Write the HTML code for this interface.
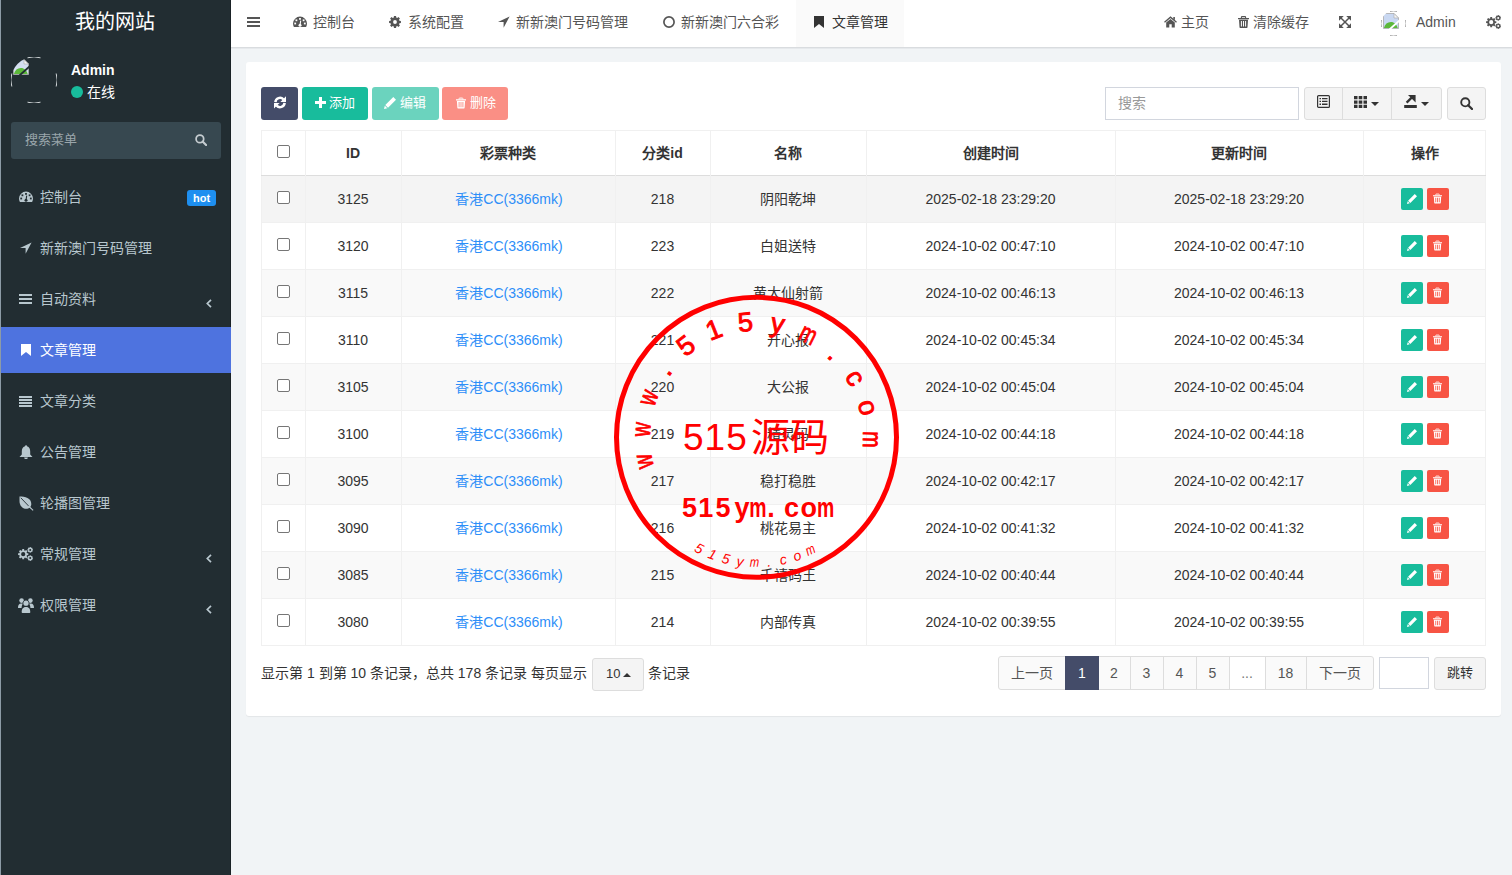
<!DOCTYPE html>
<html lang="zh-CN"><head><meta charset="utf-8">
<style>
*{box-sizing:border-box;margin:0;padding:0}
html,body{width:1512px;height:875px;overflow:hidden}
body{font-family:"Liberation Sans",sans-serif;font-size:14px;color:#333;background:#f1f4f6;position:relative}
.abs{position:absolute}
svg{display:block}
.t{position:absolute;white-space:nowrap;line-height:18px}
</style></head><body>

<div class="abs" style="left:0;top:0;width:231px;height:875px;background:#222d32"></div>
<div class="abs" style="left:0;top:0;width:1px;height:875px;background:#8d9ba6"></div>
<div class="abs" style="left:230px;top:0;width:1px;height:875px;background:#1a2226"></div>
<div class="t" style="left:0;width:230px;text-align:center;top:10px;color:#fff;font-size:20px;line-height:24px">我的网站</div>
<svg class="abs" style="left:11px;top:57px" width="46" height="46" viewBox="0 0 46 46"><g fill="none" stroke="#cfd4d6" stroke-width="1"><path d="M16.5 0.8A22.2 22.2 0 0 1 29.5 0.8"/><path d="M16.5 45.2A22.2 22.2 0 0 0 29.5 45.2"/><path d="M0.8 16.5A22.2 22.2 0 0 0 0.8 29.5"/><path d="M45.2 16.5A22.2 22.2 0 0 1 45.2 29.5"/></g></svg>
<div class="abs" style="left:11px;top:57px;width:46px;height:46px;border-radius:50%;overflow:hidden"><svg class="abs" style="left:2px;top:2px" width="16" height="16" viewBox="0 0 16 16"><path fill="#d4def0" stroke="#a9a9a9" stroke-width=".8" d="M.5 .5h10.5l4.5 4.5v10.5H.5z"/><path fill="#f4f4f4" stroke="#a9a9a9" stroke-width=".6" d="M11 .5v4.5h4.5z"/><path fill="#5cb83a" d="M.9 15.1c1-4 3.5-6 7-6s5.6 2.4 6.8 6z"/><path stroke="#222d32" stroke-width="1.8" d="M6.5 16.5L16.5 7.5"/></svg></div>
<div class="t" style="left:71px;top:61px;color:#fff;font-weight:bold;font-size:14px">Admin</div>
<div class="abs" style="left:71px;top:86px;width:12px;height:12px;border-radius:50%;background:#18bc9c"></div>
<div class="t" style="left:87px;top:83px;color:#fff;font-size:14px">在线</div>
<div class="abs" style="left:11px;top:122px;width:210px;height:37px;background:#374850;border-radius:3px"></div>
<div class="t" style="left:25px;top:131px;color:#9aa6ab;font-size:13px">搜索菜单</div>
<svg class="abs" style="left:195px;top:134px" width="12" height="12" viewBox="0 0 13 13"><circle cx="5.3" cy="5.3" r="4.1" fill="none" stroke="#c5ccd0" stroke-width="1.9"/><path d="M8.2 8.2l3.8 3.8" stroke="#c5ccd0" stroke-width="2.3" stroke-linecap="round"/></svg>
<div class="t" style="left:40px;top:188px;color:#b8c7ce;font-size:14px">控制台</div>
<svg class="abs" style="left:19px;top:191px" width="14" height="12" viewBox="0 0 14 12"><path fill="#b8c7ce" d="M7 .6A7 7 0 0 0 0 7.6c0 1.3.3 2.4.9 3.4h12.2c.6-1 .9-2.1.9-3.4A7 7 0 0 0 7 .6z"/><g fill="#222d32"><rect x="6.1" y="2" width="1.8" height="1.8"/><rect x="2.5" y="3.4" width="1.8" height="1.8"/><rect x="9.7" y="3.4" width="1.8" height="1.8"/><rect x="1.3" y="6.6" width="1.8" height="1.8"/><rect x="10.9" y="6.6" width="1.8" height="1.8"/><circle cx="7" cy="9.3" r="1.5"/></g><path d="M7 9.3L7.7 4.6" stroke="#222d32" stroke-width="1.1"/></svg>
<div class="abs" style="left:187px;top:190px;width:29px;height:16px;background:#1e8ff0;color:#fff;border-radius:3px;font-size:11px;font-weight:bold;line-height:16px;text-align:center">hot</div>
<div class="t" style="left:40px;top:239px;color:#b8c7ce;font-size:14px">新新澳门号码管理</div>
<svg class="abs" style="left:20px;top:242px" width="12" height="12" viewBox="0 0 12 12"><path fill="#b8c7ce" d="M11.6 .6L0 6h5.6v5.8z"/></svg>
<div class="t" style="left:40px;top:290px;color:#b8c7ce;font-size:14px">自动资料</div>
<svg class="abs" style="left:19px;top:294px" width="13" height="10" viewBox="0 0 13 10"><path fill="#b8c7ce" d="M0 0h13v2H0zM0 4h13v2H0zM0 8h13v2H0z"/></svg>
<svg class="abs" style="left:206px;top:299px" width="6" height="9" viewBox="0 0 6 9"><path d="M5 .8L1.3 4.5 5 8.2" fill="none" stroke="#b8c7ce" stroke-width="1.7"/></svg>
<div class="abs" style="left:1px;top:327px;width:230px;height:46px;background:#4e73df"></div>
<div class="t" style="left:40px;top:341px;color:#fff;font-size:14px">文章管理</div>
<svg class="abs" style="left:21px;top:344px" width="10" height="12" viewBox="0 0 10 12"><path fill="#fff" d="M0 0h10v12L5 8 0 12z"/></svg>
<div class="t" style="left:40px;top:392px;color:#b8c7ce;font-size:14px">文章分类</div>
<svg class="abs" style="left:19px;top:396px" width="13" height="11" viewBox="0 0 13 11"><path fill="#b8c7ce" d="M0 0h13v2H0zM0 3h13v2H0zM0 6h13v2H0zM0 9h13v2H0z"/></svg>
<div class="t" style="left:40px;top:443px;color:#b8c7ce;font-size:14px">公告管理</div>
<svg class="abs" style="left:19px;top:445px" width="14" height="14" viewBox="0 0 14 14"><path fill="#b8c7ce" d="M7 .3c.6 0 1 .4 1 .9 2.4.5 3.2 2.8 3.2 5.2v3.2l2.3 2.3H.5l2.3-2.3V6.4C2.8 4 3.6 1.7 6 1.2c0-.5.4-.9 1-.9zM5.2 12.4h3.6a1.8 1.8 0 0 1-3.6 0z"/></svg>
<div class="t" style="left:40px;top:494px;color:#b8c7ce;font-size:14px">轮播图管理</div>
<svg class="abs" style="left:19px;top:496px" width="15" height="15" viewBox="0 0 15 15"><path fill="#b8c7ce" d="M.5 .5C6 .5 12.3 1.8 12.3 8c0 3-2.3 4.8-5 4.8C3.2 12.8.5 9.5.5 5z"/><path d="M1.8 1.8L9.8 10.2" stroke="#222d32" stroke-width=".9"/><path d="M9.5 10l4.6 4.4" stroke="#b8c7ce" stroke-width="1.1"/></svg>
<div class="t" style="left:40px;top:545px;color:#b8c7ce;font-size:14px">常规管理</div>
<svg class="abs" style="left:18px;top:547px" width="15" height="14" viewBox="0 0 15 14"><path fill="#b8c7ce" fill-rule="evenodd" d="M10.32 6.29 L10.32 8.11 L8.96 8.24 L8.60 9.12 L9.47 10.17 L8.17 11.47 L7.12 10.60 L6.24 10.96 L6.11 12.32 L4.29 12.32 L4.16 10.96 L3.28 10.60 L2.23 11.47 L0.93 10.17 L1.80 9.12 L1.44 8.24 L0.08 8.11 L0.08 6.29 L1.44 6.16 L1.80 5.28 L0.93 4.23 L2.23 2.93 L3.28 3.80 L4.16 3.44 L4.29 2.08 L6.11 2.08 L6.24 3.44 L7.12 3.80 L8.17 2.93 L9.47 4.23 L8.60 5.28 L8.96 6.16ZM7.30 7.20A2.1 2.1 0 1 0 3.10 7.20A2.1 2.1 0 1 0 7.30 7.20ZM15.04 2.33 L15.04 3.47 L14.31 3.53 L14.14 3.94 L14.61 4.51 L13.81 5.31 L13.24 4.84 L12.83 5.01 L12.77 5.74 L11.63 5.74 L11.57 5.01 L11.16 4.84 L10.59 5.31 L9.79 4.51 L10.26 3.94 L10.09 3.53 L9.36 3.47 L9.36 2.33 L10.09 2.27 L10.26 1.86 L9.79 1.29 L10.59 0.49 L11.16 0.96 L11.57 0.79 L11.63 0.06 L12.77 0.06 L12.83 0.79 L13.24 0.96 L13.81 0.49 L14.61 1.29 L14.14 1.86 L14.31 2.27ZM13.20 2.90A1.0 1.0 0 1 0 11.20 2.90A1.0 1.0 0 1 0 13.20 2.90ZM15.04 10.53 L15.04 11.67 L14.31 11.73 L14.14 12.14 L14.61 12.71 L13.81 13.51 L13.24 13.04 L12.83 13.21 L12.77 13.94 L11.63 13.94 L11.57 13.21 L11.16 13.04 L10.59 13.51 L9.79 12.71 L10.26 12.14 L10.09 11.73 L9.36 11.67 L9.36 10.53 L10.09 10.47 L10.26 10.06 L9.79 9.49 L10.59 8.69 L11.16 9.16 L11.57 8.99 L11.63 8.26 L12.77 8.26 L12.83 8.99 L13.24 9.16 L13.81 8.69 L14.61 9.49 L14.14 10.06 L14.31 10.47ZM13.20 11.10A1.0 1.0 0 1 0 11.20 11.10A1.0 1.0 0 1 0 13.20 11.10Z"/></svg>
<svg class="abs" style="left:206px;top:554px" width="6" height="9" viewBox="0 0 6 9"><path d="M5 .8L1.3 4.5 5 8.2" fill="none" stroke="#b8c7ce" stroke-width="1.7"/></svg>
<div class="t" style="left:40px;top:596px;color:#b8c7ce;font-size:14px">权限管理</div>
<svg class="abs" style="left:18px;top:598px" width="16" height="15" viewBox="0 0 16 15"><g fill="#b8c7ce"><circle cx="3.6" cy="2.6" r="2.3"/><circle cx="12.4" cy="2.6" r="2.3"/><path d="M0 10c0-3 .9-4.6 3.3-4.6h1.8C4.2 6.4 3.6 8 3.6 10z"/><path d="M16 10c0-3-.9-4.6-3.3-4.6h-1.8c.9 1 1.5 2.6 1.5 4.6z"/></g><circle cx="8" cy="5.2" r="3.2" fill="#222d32"/><circle cx="8" cy="5.2" r="2.6" fill="#b8c7ce"/><path fill="#222d32" d="M2.9 15c-.3-3.6.8-6.8 5.1-6.8s5.4 3.2 5.1 6.8z"/><path fill="#b8c7ce" d="M3.7 14.3c0-3 .9-5.4 4.3-5.4s4.3 2.4 4.3 5.4c0 .5-.3.7-.7.7H4.4c-.4 0-.7-.2-.7-.7z"/></svg>
<svg class="abs" style="left:206px;top:605px" width="6" height="9" viewBox="0 0 6 9"><path d="M5 .8L1.3 4.5 5 8.2" fill="none" stroke="#b8c7ce" stroke-width="1.7"/></svg>
<div class="abs" style="left:231px;top:0;width:1281px;height:47px;background:#fff"></div>
<div class="abs" style="left:231px;top:47px;width:1281px;height:1px;background:#d9dcdf"></div>
<div class="abs" style="left:231px;top:48px;width:1281px;height:1px;background:#e6e9ec"></div>
<svg class="abs" style="left:247px;top:17px" width="13" height="10" viewBox="0 0 13 10"><path fill="#555" d="M0 0h13v2H0zM0 4h13v2H0zM0 8h13v2H0z"/></svg>
<div class="abs" style="left:796px;top:0;width:108px;height:47px;background:#fafafa"></div>
<svg class="abs" style="left:293px;top:16px" width="14" height="12" viewBox="0 0 14 12"><path fill="#555" d="M7 .6A7 7 0 0 0 0 7.6c0 1.3.3 2.4.9 3.4h12.2c.6-1 .9-2.1.9-3.4A7 7 0 0 0 7 .6z"/><g fill="#fff"><rect x="6.1" y="2" width="1.8" height="1.8"/><rect x="2.5" y="3.4" width="1.8" height="1.8"/><rect x="9.7" y="3.4" width="1.8" height="1.8"/><rect x="1.3" y="6.6" width="1.8" height="1.8"/><rect x="10.9" y="6.6" width="1.8" height="1.8"/><circle cx="7" cy="9.3" r="1.5"/></g><path d="M7 9.3L7.7 4.6" stroke="#fff" stroke-width="1.1"/></svg>
<div class="t" style="left:313px;top:13px;color:#555">控制台</div>
<svg class="abs" style="left:389px;top:16px" width="12" height="12" viewBox="0 0 12 12"><path fill="#555" fill-rule="evenodd" d="M11.91 4.95 L11.91 7.05 L10.43 7.23 L10.00 8.26 L10.92 9.43 L9.43 10.92 L8.26 10.00 L7.23 10.43 L7.05 11.91 L4.95 11.91 L4.77 10.43 L3.74 10.00 L2.57 10.92 L1.08 9.43 L2.00 8.26 L1.57 7.23 L0.09 7.05 L0.09 4.95 L1.57 4.77 L2.00 3.74 L1.08 2.57 L2.57 1.08 L3.74 2.00 L4.77 1.57 L4.95 0.09 L7.05 0.09 L7.23 1.57 L8.26 2.00 L9.43 1.08 L10.92 2.57 L10.00 3.74 L10.43 4.77ZM7.90 6.00A1.9 1.9 0 1 0 4.10 6.00A1.9 1.9 0 1 0 7.90 6.00Z"/></svg>
<div class="t" style="left:408px;top:13px;color:#555">系统配置</div>
<svg class="abs" style="left:498px;top:16px" width="12" height="12" viewBox="0 0 12 12"><path fill="#555" d="M11.6 .6L0 6h5.6v5.8z"/></svg>
<div class="t" style="left:516px;top:13px;color:#555">新新澳门号码管理</div>
<svg class="abs" style="left:663px;top:16px" width="12" height="12" viewBox="0 0 12 12"><circle cx="6" cy="6" r="5.1" fill="none" stroke="#555" stroke-width="1.7"/></svg>
<div class="t" style="left:681px;top:13px;color:#555">新新澳门六合彩</div>
<svg class="abs" style="left:814px;top:16px" width="10" height="12" viewBox="0 0 10 12"><path fill="#333" d="M0 0h10v12L5 8 0 12z"/></svg>
<div class="t" style="left:832px;top:13px;color:#333">文章管理</div>
<svg class="abs" style="left:1164px;top:16px" width="13" height="12" viewBox="0 0 13 12"><path fill="none" stroke="#555" stroke-width="1.3" d="M.5 6.3L6.5 1.2l6 5.1"/><path fill="#555" d="M9.3 1h1.6v3.2L9.3 2.9z"/><path fill="#555" d="M2.2 6.6L6.5 3l4.3 3.6V11.5H7.7V8.3H5.3v3.2H2.2z"/></svg>
<div class="t" style="left:1181px;top:13px;color:#555">主页</div>
<svg class="abs" style="left:1238px;top:16px" width="11" height="12" viewBox="0 0 11 12"><path fill="none" stroke="#555" stroke-width="1.1" d="M3.4 2.2V1.2c0-.4.3-.6.6-.6h3c.3 0 .6.2.6.6v1"/><path fill="#555" d="M0 1.9h11v1.4H0zM1 3.8h9l-.5 7.5c0 .4-.3.7-.7.7H2.2c-.4 0-.7-.3-.7-.7z"/><path fill="#fff" d="M2.9 5h1v5.6h-1zM5 5h1v5.6H5zM7.1 5h1v5.6h-1z"/></svg>
<div class="t" style="left:1253px;top:13px;color:#555">清除缓存</div>
<svg class="abs" style="left:1339px;top:16px" width="12" height="12" viewBox="0 0 12 12"><path fill="#555" d="M0 0h4.8L0 4.8zM12 0v4.8L7.2 0zM12 12H7.2L12 7.2zM0 12V7.2L4.8 12z"/><path stroke="#555" stroke-width="1.5" d="M1.2 1.2l9.6 9.6M10.8 1.2l-9.6 9.6"/></svg>
<svg class="abs" style="left:1381px;top:11px" width="25" height="25" viewBox="0 0 25 25"><g fill="none" stroke="#aaa" stroke-width="1"><path d="M9 0.5A12 12 0 0 1 16 0.5"/><path d="M9 24.5A12 12 0 0 0 16 24.5"/><path d="M0.5 9A12 12 0 0 0 0.5 16"/><path d="M24.5 9A12 12 0 0 1 24.5 16"/></g></svg>
<div class="abs" style="left:1381px;top:11px;width:25px;height:25px;border-radius:50%;overflow:hidden"><svg class="abs" style="left:2px;top:2px" width="16" height="16" viewBox="0 0 16 16"><path fill="#c9d8f2" stroke="#a9a9a9" stroke-width=".8" d="M.5 .5h10.5l4.5 4.5v10.5H.5z"/><path fill="#f4f4f4" stroke="#a9a9a9" stroke-width=".6" d="M11 .5v4.5h4.5z"/><path fill="#5cb83a" d="M.9 15.1c1-4 3.5-6 7-6s5.6 2.4 6.8 6z"/><path stroke="#fff" stroke-width="1.8" d="M6.5 16.5L16.5 7.5"/></svg></div>
<div class="t" style="left:1416px;top:13px;color:#555;font-size:14px">Admin</div>
<svg class="abs" style="left:1486px;top:15px" width="15" height="14" viewBox="0 0 15 14"><path fill="#555" fill-rule="evenodd" d="M10.32 6.29 L10.32 8.11 L8.96 8.24 L8.60 9.12 L9.47 10.17 L8.17 11.47 L7.12 10.60 L6.24 10.96 L6.11 12.32 L4.29 12.32 L4.16 10.96 L3.28 10.60 L2.23 11.47 L0.93 10.17 L1.80 9.12 L1.44 8.24 L0.08 8.11 L0.08 6.29 L1.44 6.16 L1.80 5.28 L0.93 4.23 L2.23 2.93 L3.28 3.80 L4.16 3.44 L4.29 2.08 L6.11 2.08 L6.24 3.44 L7.12 3.80 L8.17 2.93 L9.47 4.23 L8.60 5.28 L8.96 6.16ZM7.30 7.20A2.1 2.1 0 1 0 3.10 7.20A2.1 2.1 0 1 0 7.30 7.20ZM15.04 2.33 L15.04 3.47 L14.31 3.53 L14.14 3.94 L14.61 4.51 L13.81 5.31 L13.24 4.84 L12.83 5.01 L12.77 5.74 L11.63 5.74 L11.57 5.01 L11.16 4.84 L10.59 5.31 L9.79 4.51 L10.26 3.94 L10.09 3.53 L9.36 3.47 L9.36 2.33 L10.09 2.27 L10.26 1.86 L9.79 1.29 L10.59 0.49 L11.16 0.96 L11.57 0.79 L11.63 0.06 L12.77 0.06 L12.83 0.79 L13.24 0.96 L13.81 0.49 L14.61 1.29 L14.14 1.86 L14.31 2.27ZM13.20 2.90A1.0 1.0 0 1 0 11.20 2.90A1.0 1.0 0 1 0 13.20 2.90ZM15.04 10.53 L15.04 11.67 L14.31 11.73 L14.14 12.14 L14.61 12.71 L13.81 13.51 L13.24 13.04 L12.83 13.21 L12.77 13.94 L11.63 13.94 L11.57 13.21 L11.16 13.04 L10.59 13.51 L9.79 12.71 L10.26 12.14 L10.09 11.73 L9.36 11.67 L9.36 10.53 L10.09 10.47 L10.26 10.06 L9.79 9.49 L10.59 8.69 L11.16 9.16 L11.57 8.99 L11.63 8.26 L12.77 8.26 L12.83 8.99 L13.24 9.16 L13.81 8.69 L14.61 9.49 L14.14 10.06 L14.31 10.47ZM13.20 11.10A1.0 1.0 0 1 0 11.20 11.10A1.0 1.0 0 1 0 13.20 11.10Z"/></svg>
<div class="abs" style="left:246px;top:62px;width:1255px;height:654px;background:#fff;border-radius:3px;box-shadow:0 1px 1px rgba(0,0,0,.06)"></div>
<div class="abs" style="left:261px;top:87px;width:37px;height:33px;background:#444c69;border-radius:3px"></div>
<svg class="abs" style="left:274px;top:96px" width="12" height="13" viewBox="0 0 12 13"><path fill="none" stroke="#fff" stroke-width="2.5" d="M1.4 6.2A4.6 4.6 0 0 1 9.4 3.4"/><path fill="#fff" d="M12 .3v5.6H6.4z"/><path fill="none" stroke="#fff" stroke-width="2.5" d="M10.6 6.8A4.6 4.6 0 0 1 2.6 9.6"/><path fill="#fff" d="M0 12.5V6.9h5.6z"/></svg>
<div class="abs" style="left:302px;top:87px;width:66px;height:33px;background:#18bc9c;border-radius:3px"></div>
<svg class="abs" style="left:315px;top:97px" width="11" height="11" viewBox="0 0 11 11"><path fill="#fff" d="M4 0h3v4h4v3H7v4H4V7H0V4h4z"/></svg>
<div class="t" style="left:329px;top:94px;color:#fff;font-size:13px">添加</div>
<div class="abs" style="left:372px;top:87px;width:67px;height:33px;background:#6bd3be;border-radius:3px"></div>
<svg class="abs" style="left:384px;top:97px" width="12" height="12" viewBox="0 0 12 12"><path fill="#fff" d="M9.3 0L12 2.7 4 10.7 1.3 8zM.8 8.7l2.5 2.5L0 12z"/></svg>
<div class="t" style="left:400px;top:94px;color:#fff;font-size:13px">编辑</div>
<div class="abs" style="left:442px;top:87px;width:66px;height:33px;background:#fa8f85;border-radius:3px"></div>
<svg class="abs" style="left:456px;top:97px" width="10" height="12" viewBox="0 0 11 12"><path fill="none" stroke="#fff" stroke-width="1.1" d="M3.4 2.2V1.2c0-.4.3-.6.6-.6h3c.3 0 .6.2.6.6v1"/><path fill="#fff" d="M0 1.9h11v1.4H0zM1 3.8h9l-.5 7.5c0 .4-.3.7-.7.7H2.2c-.4 0-.7-.3-.7-.7z"/><path fill="#fa8f85" d="M2.9 5h1v5.6h-1zM5 5h1v5.6H5zM7.1 5h1v5.6h-1z"/></svg>
<div class="t" style="left:470px;top:94px;color:#fff;font-size:13px">删除</div>
<div class="abs" style="left:1105px;top:87px;width:194px;height:33px;border:1px solid #d2d6de;background:#fff"></div>
<div class="t" style="left:1118px;top:94px;color:#999">搜索</div>
<div class="abs" style="left:1304px;top:87px;width:138px;height:33px;border:1px solid #ddd;background:#f4f4f4;border-radius:3px"></div>
<div class="abs" style="left:1342px;top:88px;width:1px;height:31px;background:#ddd"></div>
<div class="abs" style="left:1391px;top:88px;width:1px;height:31px;background:#ddd"></div>
<div class="abs" style="left:1447px;top:87px;width:39px;height:33px;border:1px solid #ddd;background:#f4f4f4;border-radius:3px"></div>
<svg class="abs" style="left:1317px;top:95px" width="13" height="13" viewBox="0 0 13 13"><rect x=".6" y=".6" width="11.8" height="11.8" rx="1" fill="none" stroke="#333" stroke-width="1.2"/><path fill="#333" d="M2.5 3h1.5v1.3H2.5zM5 3h5.5v1.3H5zM2.5 5.8h1.5v1.3H2.5zM5 5.8h5.5v1.3H5zM2.5 8.6h1.5v1.3H2.5zM5 8.6h5.5v1.3H5z"/></svg>
<svg class="abs" style="left:1354px;top:96px" width="13" height="12" viewBox="0 0 13 12"><path fill="#333" d="M0 0h3.5v3.3H0zM4.7 0h3.6v3.3H4.7zM9.5 0H13v3.3H9.5zM0 4.4h3.5v3.3H0zM4.7 4.4h3.6v3.3H4.7zM9.5 4.4H13v3.3H9.5zM0 8.7h3.5V12H0zM4.7 8.7h3.6V12H4.7zM9.5 8.7H13V12H9.5z"/></svg>
<svg class="abs" style="left:1371px;top:102px" width="8" height="4" viewBox="0 0 8 4"><path fill="#333" d="M0 0h8L4 4z"/></svg>
<svg class="abs" style="left:1404px;top:94px" width="14" height="14" viewBox="0 0 14 14"><path fill="#333" d="M.2 11h12.6v2.9H.2zM4 1h7.6v7.6z"/><path d="M2.6 8.6L8.6 2.6" stroke="#333" stroke-width="2.3"/></svg>
<svg class="abs" style="left:1421px;top:102px" width="8" height="4" viewBox="0 0 8 4"><path fill="#333" d="M0 0h8L4 4z"/></svg>
<svg class="abs" style="left:1460px;top:97px" width="13" height="13" viewBox="0 0 13 13"><circle cx="5.3" cy="5.3" r="4.1" fill="none" stroke="#333" stroke-width="1.9"/><path d="M8.2 8.2l3.8 3.8" stroke="#333" stroke-width="2.3" stroke-linecap="round"/></svg>
<div class="abs" style="left:261px;top:130px;width:1225px;height:516px;border:1px solid #f0f0f0"></div>
<div class="abs" style="left:261px;top:175px;width:1225px;height:1px;background:#ddd"></div>
<div class="abs" style="left:262px;top:176px;width:1223px;height:47px;background:#f4f4f4"></div>
<div class="abs" style="left:262px;top:222px;width:1223px;height:1px;background:#f0f0f0"></div>
<div class="abs" style="left:262px;top:270px;width:1223px;height:47px;background:#f9f9f9"></div>
<div class="abs" style="left:262px;top:269px;width:1223px;height:1px;background:#f0f0f0"></div>
<div class="abs" style="left:262px;top:316px;width:1223px;height:1px;background:#f0f0f0"></div>
<div class="abs" style="left:262px;top:364px;width:1223px;height:47px;background:#f9f9f9"></div>
<div class="abs" style="left:262px;top:363px;width:1223px;height:1px;background:#f0f0f0"></div>
<div class="abs" style="left:262px;top:410px;width:1223px;height:1px;background:#f0f0f0"></div>
<div class="abs" style="left:262px;top:458px;width:1223px;height:47px;background:#f9f9f9"></div>
<div class="abs" style="left:262px;top:457px;width:1223px;height:1px;background:#f0f0f0"></div>
<div class="abs" style="left:262px;top:504px;width:1223px;height:1px;background:#f0f0f0"></div>
<div class="abs" style="left:262px;top:552px;width:1223px;height:47px;background:#f9f9f9"></div>
<div class="abs" style="left:262px;top:551px;width:1223px;height:1px;background:#f0f0f0"></div>
<div class="abs" style="left:262px;top:598px;width:1223px;height:1px;background:#f0f0f0"></div>
<div class="abs" style="left:305px;top:130px;width:1px;height:516px;background:#f0f0f0"></div>
<div class="abs" style="left:401px;top:130px;width:1px;height:516px;background:#f0f0f0"></div>
<div class="abs" style="left:615px;top:130px;width:1px;height:516px;background:#f0f0f0"></div>
<div class="abs" style="left:710px;top:130px;width:1px;height:516px;background:#f0f0f0"></div>
<div class="abs" style="left:866px;top:130px;width:1px;height:516px;background:#f0f0f0"></div>
<div class="abs" style="left:1115px;top:130px;width:1px;height:516px;background:#f0f0f0"></div>
<div class="abs" style="left:1363px;top:130px;width:1px;height:516px;background:#f0f0f0"></div>
<div class="abs" style="left:277px;top:145px;width:13px;height:13px;border:1px solid #767676;border-radius:2px;background:#fff"></div>
<div class="t" style="left:305px;width:96px;text-align:center;top:144px;font-weight:bold;color:#333">ID</div>
<div class="t" style="left:401px;width:214px;text-align:center;top:144px;font-weight:bold;color:#333">彩票种类</div>
<div class="t" style="left:615px;width:95px;text-align:center;top:144px;font-weight:bold;color:#333">分类id</div>
<div class="t" style="left:710px;width:156px;text-align:center;top:144px;font-weight:bold;color:#333">名称</div>
<div class="t" style="left:866px;width:249px;text-align:center;top:144px;font-weight:bold;color:#333">创建时间</div>
<div class="t" style="left:1115px;width:248px;text-align:center;top:144px;font-weight:bold;color:#333">更新时间</div>
<div class="t" style="left:1363px;width:123px;text-align:center;top:144px;font-weight:bold;color:#333">操作</div>
<div class="abs" style="left:277px;top:191px;width:13px;height:13px;border:1px solid #767676;border-radius:2px;background:#fff"></div>
<div class="t" style="left:305px;width:96px;text-align:center;top:190px;color:#333">3125</div>
<div class="t" style="left:402px;width:214px;text-align:center;top:190px;color:#2c8ef8">香港CC(3366mk)</div>
<div class="t" style="left:615px;width:95px;text-align:center;top:190px;color:#333">218</div>
<div class="t" style="left:710px;width:156px;text-align:center;top:190px;color:#333">阴阳乾坤</div>
<div class="t" style="left:866px;width:249px;text-align:center;top:190px;color:#333">2025-02-18 23:29:20</div>
<div class="t" style="left:1115px;width:248px;text-align:center;top:190px;color:#333">2025-02-18 23:29:20</div>
<div class="abs" style="left:1401px;top:188px;width:22px;height:22px;background:#18bc9c;border-radius:2px"></div>
<svg class="abs" style="left:1407px;top:194px" width="10" height="10" viewBox="0 0 12 12"><path fill="#fff" d="M9.3 0L12 2.7 4 10.7 1.3 8zM.8 8.7l2.5 2.5L0 12z"/></svg>
<div class="abs" style="left:1427px;top:188px;width:22px;height:22px;background:#f75444;border-radius:2px"></div>
<svg class="abs" style="left:1433px;top:193px" width="9" height="11" viewBox="0 0 11 12"><path fill="none" stroke="#fff" stroke-width="1.1" d="M3.4 2.2V1.2c0-.4.3-.6.6-.6h3c.3 0 .6.2.6.6v1"/><path fill="#fff" d="M0 1.9h11v1.4H0zM1 3.8h9l-.5 7.5c0 .4-.3.7-.7.7H2.2c-.4 0-.7-.3-.7-.7z"/><path fill="#f75444" d="M2.9 5h1v5.6h-1zM5 5h1v5.6H5zM7.1 5h1v5.6h-1z"/></svg>
<div class="abs" style="left:277px;top:238px;width:13px;height:13px;border:1px solid #767676;border-radius:2px;background:#fff"></div>
<div class="t" style="left:305px;width:96px;text-align:center;top:237px;color:#333">3120</div>
<div class="t" style="left:402px;width:214px;text-align:center;top:237px;color:#2c8ef8">香港CC(3366mk)</div>
<div class="t" style="left:615px;width:95px;text-align:center;top:237px;color:#333">223</div>
<div class="t" style="left:710px;width:156px;text-align:center;top:237px;color:#333">白姐送特</div>
<div class="t" style="left:866px;width:249px;text-align:center;top:237px;color:#333">2024-10-02 00:47:10</div>
<div class="t" style="left:1115px;width:248px;text-align:center;top:237px;color:#333">2024-10-02 00:47:10</div>
<div class="abs" style="left:1401px;top:235px;width:22px;height:22px;background:#18bc9c;border-radius:2px"></div>
<svg class="abs" style="left:1407px;top:241px" width="10" height="10" viewBox="0 0 12 12"><path fill="#fff" d="M9.3 0L12 2.7 4 10.7 1.3 8zM.8 8.7l2.5 2.5L0 12z"/></svg>
<div class="abs" style="left:1427px;top:235px;width:22px;height:22px;background:#f75444;border-radius:2px"></div>
<svg class="abs" style="left:1433px;top:240px" width="9" height="11" viewBox="0 0 11 12"><path fill="none" stroke="#fff" stroke-width="1.1" d="M3.4 2.2V1.2c0-.4.3-.6.6-.6h3c.3 0 .6.2.6.6v1"/><path fill="#fff" d="M0 1.9h11v1.4H0zM1 3.8h9l-.5 7.5c0 .4-.3.7-.7.7H2.2c-.4 0-.7-.3-.7-.7z"/><path fill="#f75444" d="M2.9 5h1v5.6h-1zM5 5h1v5.6H5zM7.1 5h1v5.6h-1z"/></svg>
<div class="abs" style="left:277px;top:285px;width:13px;height:13px;border:1px solid #767676;border-radius:2px;background:#fff"></div>
<div class="t" style="left:305px;width:96px;text-align:center;top:284px;color:#333">3115</div>
<div class="t" style="left:402px;width:214px;text-align:center;top:284px;color:#2c8ef8">香港CC(3366mk)</div>
<div class="t" style="left:615px;width:95px;text-align:center;top:284px;color:#333">222</div>
<div class="t" style="left:710px;width:156px;text-align:center;top:284px;color:#333">黄大仙射箭</div>
<div class="t" style="left:866px;width:249px;text-align:center;top:284px;color:#333">2024-10-02 00:46:13</div>
<div class="t" style="left:1115px;width:248px;text-align:center;top:284px;color:#333">2024-10-02 00:46:13</div>
<div class="abs" style="left:1401px;top:282px;width:22px;height:22px;background:#18bc9c;border-radius:2px"></div>
<svg class="abs" style="left:1407px;top:288px" width="10" height="10" viewBox="0 0 12 12"><path fill="#fff" d="M9.3 0L12 2.7 4 10.7 1.3 8zM.8 8.7l2.5 2.5L0 12z"/></svg>
<div class="abs" style="left:1427px;top:282px;width:22px;height:22px;background:#f75444;border-radius:2px"></div>
<svg class="abs" style="left:1433px;top:287px" width="9" height="11" viewBox="0 0 11 12"><path fill="none" stroke="#fff" stroke-width="1.1" d="M3.4 2.2V1.2c0-.4.3-.6.6-.6h3c.3 0 .6.2.6.6v1"/><path fill="#fff" d="M0 1.9h11v1.4H0zM1 3.8h9l-.5 7.5c0 .4-.3.7-.7.7H2.2c-.4 0-.7-.3-.7-.7z"/><path fill="#f75444" d="M2.9 5h1v5.6h-1zM5 5h1v5.6H5zM7.1 5h1v5.6h-1z"/></svg>
<div class="abs" style="left:277px;top:332px;width:13px;height:13px;border:1px solid #767676;border-radius:2px;background:#fff"></div>
<div class="t" style="left:305px;width:96px;text-align:center;top:331px;color:#333">3110</div>
<div class="t" style="left:402px;width:214px;text-align:center;top:331px;color:#2c8ef8">香港CC(3366mk)</div>
<div class="t" style="left:615px;width:95px;text-align:center;top:331px;color:#333">221</div>
<div class="t" style="left:710px;width:156px;text-align:center;top:331px;color:#333">开心报</div>
<div class="t" style="left:866px;width:249px;text-align:center;top:331px;color:#333">2024-10-02 00:45:34</div>
<div class="t" style="left:1115px;width:248px;text-align:center;top:331px;color:#333">2024-10-02 00:45:34</div>
<div class="abs" style="left:1401px;top:329px;width:22px;height:22px;background:#18bc9c;border-radius:2px"></div>
<svg class="abs" style="left:1407px;top:335px" width="10" height="10" viewBox="0 0 12 12"><path fill="#fff" d="M9.3 0L12 2.7 4 10.7 1.3 8zM.8 8.7l2.5 2.5L0 12z"/></svg>
<div class="abs" style="left:1427px;top:329px;width:22px;height:22px;background:#f75444;border-radius:2px"></div>
<svg class="abs" style="left:1433px;top:334px" width="9" height="11" viewBox="0 0 11 12"><path fill="none" stroke="#fff" stroke-width="1.1" d="M3.4 2.2V1.2c0-.4.3-.6.6-.6h3c.3 0 .6.2.6.6v1"/><path fill="#fff" d="M0 1.9h11v1.4H0zM1 3.8h9l-.5 7.5c0 .4-.3.7-.7.7H2.2c-.4 0-.7-.3-.7-.7z"/><path fill="#f75444" d="M2.9 5h1v5.6h-1zM5 5h1v5.6H5zM7.1 5h1v5.6h-1z"/></svg>
<div class="abs" style="left:277px;top:379px;width:13px;height:13px;border:1px solid #767676;border-radius:2px;background:#fff"></div>
<div class="t" style="left:305px;width:96px;text-align:center;top:378px;color:#333">3105</div>
<div class="t" style="left:402px;width:214px;text-align:center;top:378px;color:#2c8ef8">香港CC(3366mk)</div>
<div class="t" style="left:615px;width:95px;text-align:center;top:378px;color:#333">220</div>
<div class="t" style="left:710px;width:156px;text-align:center;top:378px;color:#333">大公报</div>
<div class="t" style="left:866px;width:249px;text-align:center;top:378px;color:#333">2024-10-02 00:45:04</div>
<div class="t" style="left:1115px;width:248px;text-align:center;top:378px;color:#333">2024-10-02 00:45:04</div>
<div class="abs" style="left:1401px;top:376px;width:22px;height:22px;background:#18bc9c;border-radius:2px"></div>
<svg class="abs" style="left:1407px;top:382px" width="10" height="10" viewBox="0 0 12 12"><path fill="#fff" d="M9.3 0L12 2.7 4 10.7 1.3 8zM.8 8.7l2.5 2.5L0 12z"/></svg>
<div class="abs" style="left:1427px;top:376px;width:22px;height:22px;background:#f75444;border-radius:2px"></div>
<svg class="abs" style="left:1433px;top:381px" width="9" height="11" viewBox="0 0 11 12"><path fill="none" stroke="#fff" stroke-width="1.1" d="M3.4 2.2V1.2c0-.4.3-.6.6-.6h3c.3 0 .6.2.6.6v1"/><path fill="#fff" d="M0 1.9h11v1.4H0zM1 3.8h9l-.5 7.5c0 .4-.3.7-.7.7H2.2c-.4 0-.7-.3-.7-.7z"/><path fill="#f75444" d="M2.9 5h1v5.6h-1zM5 5h1v5.6H5zM7.1 5h1v5.6h-1z"/></svg>
<div class="abs" style="left:277px;top:426px;width:13px;height:13px;border:1px solid #767676;border-radius:2px;background:#fff"></div>
<div class="t" style="left:305px;width:96px;text-align:center;top:425px;color:#333">3100</div>
<div class="t" style="left:402px;width:214px;text-align:center;top:425px;color:#2c8ef8">香港CC(3366mk)</div>
<div class="t" style="left:615px;width:95px;text-align:center;top:425px;color:#333">219</div>
<div class="t" style="left:710px;width:156px;text-align:center;top:425px;color:#333">精灵码</div>
<div class="t" style="left:866px;width:249px;text-align:center;top:425px;color:#333">2024-10-02 00:44:18</div>
<div class="t" style="left:1115px;width:248px;text-align:center;top:425px;color:#333">2024-10-02 00:44:18</div>
<div class="abs" style="left:1401px;top:423px;width:22px;height:22px;background:#18bc9c;border-radius:2px"></div>
<svg class="abs" style="left:1407px;top:429px" width="10" height="10" viewBox="0 0 12 12"><path fill="#fff" d="M9.3 0L12 2.7 4 10.7 1.3 8zM.8 8.7l2.5 2.5L0 12z"/></svg>
<div class="abs" style="left:1427px;top:423px;width:22px;height:22px;background:#f75444;border-radius:2px"></div>
<svg class="abs" style="left:1433px;top:428px" width="9" height="11" viewBox="0 0 11 12"><path fill="none" stroke="#fff" stroke-width="1.1" d="M3.4 2.2V1.2c0-.4.3-.6.6-.6h3c.3 0 .6.2.6.6v1"/><path fill="#fff" d="M0 1.9h11v1.4H0zM1 3.8h9l-.5 7.5c0 .4-.3.7-.7.7H2.2c-.4 0-.7-.3-.7-.7z"/><path fill="#f75444" d="M2.9 5h1v5.6h-1zM5 5h1v5.6H5zM7.1 5h1v5.6h-1z"/></svg>
<div class="abs" style="left:277px;top:473px;width:13px;height:13px;border:1px solid #767676;border-radius:2px;background:#fff"></div>
<div class="t" style="left:305px;width:96px;text-align:center;top:472px;color:#333">3095</div>
<div class="t" style="left:402px;width:214px;text-align:center;top:472px;color:#2c8ef8">香港CC(3366mk)</div>
<div class="t" style="left:615px;width:95px;text-align:center;top:472px;color:#333">217</div>
<div class="t" style="left:710px;width:156px;text-align:center;top:472px;color:#333">稳打稳胜</div>
<div class="t" style="left:866px;width:249px;text-align:center;top:472px;color:#333">2024-10-02 00:42:17</div>
<div class="t" style="left:1115px;width:248px;text-align:center;top:472px;color:#333">2024-10-02 00:42:17</div>
<div class="abs" style="left:1401px;top:470px;width:22px;height:22px;background:#18bc9c;border-radius:2px"></div>
<svg class="abs" style="left:1407px;top:476px" width="10" height="10" viewBox="0 0 12 12"><path fill="#fff" d="M9.3 0L12 2.7 4 10.7 1.3 8zM.8 8.7l2.5 2.5L0 12z"/></svg>
<div class="abs" style="left:1427px;top:470px;width:22px;height:22px;background:#f75444;border-radius:2px"></div>
<svg class="abs" style="left:1433px;top:475px" width="9" height="11" viewBox="0 0 11 12"><path fill="none" stroke="#fff" stroke-width="1.1" d="M3.4 2.2V1.2c0-.4.3-.6.6-.6h3c.3 0 .6.2.6.6v1"/><path fill="#fff" d="M0 1.9h11v1.4H0zM1 3.8h9l-.5 7.5c0 .4-.3.7-.7.7H2.2c-.4 0-.7-.3-.7-.7z"/><path fill="#f75444" d="M2.9 5h1v5.6h-1zM5 5h1v5.6H5zM7.1 5h1v5.6h-1z"/></svg>
<div class="abs" style="left:277px;top:520px;width:13px;height:13px;border:1px solid #767676;border-radius:2px;background:#fff"></div>
<div class="t" style="left:305px;width:96px;text-align:center;top:519px;color:#333">3090</div>
<div class="t" style="left:402px;width:214px;text-align:center;top:519px;color:#2c8ef8">香港CC(3366mk)</div>
<div class="t" style="left:615px;width:95px;text-align:center;top:519px;color:#333">216</div>
<div class="t" style="left:710px;width:156px;text-align:center;top:519px;color:#333">桃花易主</div>
<div class="t" style="left:866px;width:249px;text-align:center;top:519px;color:#333">2024-10-02 00:41:32</div>
<div class="t" style="left:1115px;width:248px;text-align:center;top:519px;color:#333">2024-10-02 00:41:32</div>
<div class="abs" style="left:1401px;top:517px;width:22px;height:22px;background:#18bc9c;border-radius:2px"></div>
<svg class="abs" style="left:1407px;top:523px" width="10" height="10" viewBox="0 0 12 12"><path fill="#fff" d="M9.3 0L12 2.7 4 10.7 1.3 8zM.8 8.7l2.5 2.5L0 12z"/></svg>
<div class="abs" style="left:1427px;top:517px;width:22px;height:22px;background:#f75444;border-radius:2px"></div>
<svg class="abs" style="left:1433px;top:522px" width="9" height="11" viewBox="0 0 11 12"><path fill="none" stroke="#fff" stroke-width="1.1" d="M3.4 2.2V1.2c0-.4.3-.6.6-.6h3c.3 0 .6.2.6.6v1"/><path fill="#fff" d="M0 1.9h11v1.4H0zM1 3.8h9l-.5 7.5c0 .4-.3.7-.7.7H2.2c-.4 0-.7-.3-.7-.7z"/><path fill="#f75444" d="M2.9 5h1v5.6h-1zM5 5h1v5.6H5zM7.1 5h1v5.6h-1z"/></svg>
<div class="abs" style="left:277px;top:567px;width:13px;height:13px;border:1px solid #767676;border-radius:2px;background:#fff"></div>
<div class="t" style="left:305px;width:96px;text-align:center;top:566px;color:#333">3085</div>
<div class="t" style="left:402px;width:214px;text-align:center;top:566px;color:#2c8ef8">香港CC(3366mk)</div>
<div class="t" style="left:615px;width:95px;text-align:center;top:566px;color:#333">215</div>
<div class="t" style="left:710px;width:156px;text-align:center;top:566px;color:#333">千禧码王</div>
<div class="t" style="left:866px;width:249px;text-align:center;top:566px;color:#333">2024-10-02 00:40:44</div>
<div class="t" style="left:1115px;width:248px;text-align:center;top:566px;color:#333">2024-10-02 00:40:44</div>
<div class="abs" style="left:1401px;top:564px;width:22px;height:22px;background:#18bc9c;border-radius:2px"></div>
<svg class="abs" style="left:1407px;top:570px" width="10" height="10" viewBox="0 0 12 12"><path fill="#fff" d="M9.3 0L12 2.7 4 10.7 1.3 8zM.8 8.7l2.5 2.5L0 12z"/></svg>
<div class="abs" style="left:1427px;top:564px;width:22px;height:22px;background:#f75444;border-radius:2px"></div>
<svg class="abs" style="left:1433px;top:569px" width="9" height="11" viewBox="0 0 11 12"><path fill="none" stroke="#fff" stroke-width="1.1" d="M3.4 2.2V1.2c0-.4.3-.6.6-.6h3c.3 0 .6.2.6.6v1"/><path fill="#fff" d="M0 1.9h11v1.4H0zM1 3.8h9l-.5 7.5c0 .4-.3.7-.7.7H2.2c-.4 0-.7-.3-.7-.7z"/><path fill="#f75444" d="M2.9 5h1v5.6h-1zM5 5h1v5.6H5zM7.1 5h1v5.6h-1z"/></svg>
<div class="abs" style="left:277px;top:614px;width:13px;height:13px;border:1px solid #767676;border-radius:2px;background:#fff"></div>
<div class="t" style="left:305px;width:96px;text-align:center;top:613px;color:#333">3080</div>
<div class="t" style="left:402px;width:214px;text-align:center;top:613px;color:#2c8ef8">香港CC(3366mk)</div>
<div class="t" style="left:615px;width:95px;text-align:center;top:613px;color:#333">214</div>
<div class="t" style="left:710px;width:156px;text-align:center;top:613px;color:#333">内部传真</div>
<div class="t" style="left:866px;width:249px;text-align:center;top:613px;color:#333">2024-10-02 00:39:55</div>
<div class="t" style="left:1115px;width:248px;text-align:center;top:613px;color:#333">2024-10-02 00:39:55</div>
<div class="abs" style="left:1401px;top:611px;width:22px;height:22px;background:#18bc9c;border-radius:2px"></div>
<svg class="abs" style="left:1407px;top:617px" width="10" height="10" viewBox="0 0 12 12"><path fill="#fff" d="M9.3 0L12 2.7 4 10.7 1.3 8zM.8 8.7l2.5 2.5L0 12z"/></svg>
<div class="abs" style="left:1427px;top:611px;width:22px;height:22px;background:#f75444;border-radius:2px"></div>
<svg class="abs" style="left:1433px;top:616px" width="9" height="11" viewBox="0 0 11 12"><path fill="none" stroke="#fff" stroke-width="1.1" d="M3.4 2.2V1.2c0-.4.3-.6.6-.6h3c.3 0 .6.2.6.6v1"/><path fill="#fff" d="M0 1.9h11v1.4H0zM1 3.8h9l-.5 7.5c0 .4-.3.7-.7.7H2.2c-.4 0-.7-.3-.7-.7z"/><path fill="#f75444" d="M2.9 5h1v5.6h-1zM5 5h1v5.6H5zM7.1 5h1v5.6h-1z"/></svg>
<div class="t" style="left:261px;top:664px;color:#333">显示第 1 到第 10 条记录，总共 178 条记录 每页显示</div>
<div class="abs" style="left:592px;top:658px;width:52px;height:33px;background:#f4f4f4;border:1px solid #ddd;border-radius:3px"></div>
<div class="t" style="left:606px;top:665px;color:#333;font-size:13px">10</div>
<svg class="abs" style="left:623px;top:673px" width="8" height="4" viewBox="0 0 8 4"><path fill="#333" d="M0 4h8L4 0z"/></svg>
<div class="t" style="left:648px;top:664px;color:#333">条记录</div>
<div class="abs" style="left:998px;top:656px;width:376px;height:34px;border:1px solid #ddd;border-radius:3px;background:#fafafa"></div>
<div class="abs" style="left:1130px;top:656px;width:1px;height:34px;background:#ddd"></div>
<div class="abs" style="left:1163px;top:656px;width:1px;height:34px;background:#ddd"></div>
<div class="abs" style="left:1196px;top:656px;width:1px;height:34px;background:#ddd"></div>
<div class="abs" style="left:1229px;top:657px;width:36px;height:32px;background:#fff"></div>
<div class="abs" style="left:1229px;top:656px;width:1px;height:34px;background:#ddd"></div>
<div class="abs" style="left:1265px;top:656px;width:1px;height:34px;background:#ddd"></div>
<div class="abs" style="left:1306px;top:656px;width:1px;height:34px;background:#ddd"></div>
<div class="t" style="left:998px;width:67px;text-align:center;top:664px;color:#555">上一页</div>
<div class="abs" style="left:1065px;top:656px;width:34px;height:34px;background:#444c69"></div>
<div class="t" style="left:1065px;width:34px;text-align:center;top:664px;color:#fff">1</div>
<div class="t" style="left:1098px;width:32px;text-align:center;top:664px;color:#555">2</div>
<div class="t" style="left:1130px;width:33px;text-align:center;top:664px;color:#555">3</div>
<div class="t" style="left:1163px;width:33px;text-align:center;top:664px;color:#555">4</div>
<div class="t" style="left:1196px;width:33px;text-align:center;top:664px;color:#555">5</div>
<div class="t" style="left:1229px;width:36px;text-align:center;top:664px;color:#777">...</div>
<div class="t" style="left:1265px;width:41px;text-align:center;top:664px;color:#555">18</div>
<div class="t" style="left:1306px;width:68px;text-align:center;top:664px;color:#555">下一页</div>
<div class="abs" style="left:1379px;top:657px;width:50px;height:32px;border:1px solid #d2d6de;background:#fff"></div>
<div class="abs" style="left:1434px;top:657px;width:52px;height:33px;border:1px solid #ddd;background:#f4f4f4;border-radius:3px"></div>
<div class="t" style="left:1434px;width:52px;text-align:center;top:664px;color:#333;font-size:13px">跳转</div>
<svg class="abs" style="left:0;top:0" width="1512" height="875" viewBox="0 0 1512 875">
<circle cx="756.5" cy="437.3" r="140" fill="none" stroke="#ff0000" stroke-width="5"/>
<text x="0" y="0" transform="translate(652.4 459.6) rotate(257.9) scale(0.72 1)" text-anchor="middle" fill="#ff0000" stroke="#ff0000" stroke-width="0.9" style="font-family:Liberation Sans;font-size:27px">w</text>
<text x="0" y="0" transform="translate(650.3 429.9) rotate(274.0) scale(0.72 1)" text-anchor="middle" fill="#ff0000" stroke="#ff0000" stroke-width="0.9" style="font-family:Liberation Sans;font-size:27px">w</text>
<text x="0" y="0" transform="translate(656.5 400.7) rotate(290.1) scale(0.72 1)" text-anchor="middle" fill="#ff0000" stroke="#ff0000" stroke-width="0.9" style="font-family:Liberation Sans;font-size:27px">w</text>
<text x="0" y="0" transform="translate(670.6 374.4) rotate(306.2) scale(1 1)" text-anchor="middle" fill="#ff0000" stroke="#ff0000" stroke-width="0.9" style="font-family:Liberation Sans;font-size:27px">.</text>
<text x="0" y="0" transform="translate(691.4 353.0) rotate(322.3) scale(1 1)" text-anchor="middle" fill="#ff0000" stroke="#ff0000" stroke-width="0.9" style="font-family:Liberation Sans;font-size:27px">5</text>
<text x="0" y="0" transform="translate(717.3 338.3) rotate(338.4) scale(1 1)" text-anchor="middle" fill="#ff0000" stroke="#ff0000" stroke-width="0.9" style="font-family:Liberation Sans;font-size:27px">1</text>
<text x="0" y="0" transform="translate(746.3 331.3) rotate(354.5) scale(1 1)" text-anchor="middle" fill="#ff0000" stroke="#ff0000" stroke-width="0.9" style="font-family:Liberation Sans;font-size:27px">5</text>
<text x="0" y="0" transform="translate(776.1 332.6) rotate(370.6) scale(1 1)" text-anchor="middle" fill="#ff0000" stroke="#ff0000" stroke-width="0.9" style="font-family:Liberation Sans;font-size:27px">y</text>
<text x="0" y="0" transform="translate(804.4 342.2) rotate(386.7) scale(0.72 1)" text-anchor="middle" fill="#ff0000" stroke="#ff0000" stroke-width="0.9" style="font-family:Liberation Sans;font-size:27px">m</text>
<text x="0" y="0" transform="translate(828.9 359.2) rotate(402.8) scale(1 1)" text-anchor="middle" fill="#ff0000" stroke="#ff0000" stroke-width="0.9" style="font-family:Liberation Sans;font-size:27px">.</text>
<text x="0" y="0" transform="translate(847.7 382.3) rotate(418.9) scale(1 1)" text-anchor="middle" fill="#ff0000" stroke="#ff0000" stroke-width="0.9" style="font-family:Liberation Sans;font-size:27px">c</text>
<text x="0" y="0" transform="translate(859.4 409.7) rotate(435.0) scale(1 1)" text-anchor="middle" fill="#ff0000" stroke="#ff0000" stroke-width="0.9" style="font-family:Liberation Sans;font-size:27px">o</text>
<text x="0" y="0" transform="translate(863.0 439.3) rotate(451.1) scale(0.72 1)" text-anchor="middle" fill="#ff0000" stroke="#ff0000" stroke-width="0.9" style="font-family:Liberation Sans;font-size:27px">m</text>
<text x="683" y="450" fill="#ff0000" style="font-family:Liberation Sans;font-size:37px;letter-spacing:1px">515</text>
<text x="751" y="451" fill="#ff0000" style="font-family:Liberation Sans;font-size:39px;font-weight:300">源码</text>
<text x="0" y="0" transform="translate(689.5 517.3) scale(1 1)" text-anchor="middle" fill="#ff0000" style="font-family:Liberation Sans;font-weight:bold;font-size:27px">5</text>
<text x="0" y="0" transform="translate(705.7 517.3) scale(1 1)" text-anchor="middle" fill="#ff0000" style="font-family:Liberation Sans;font-weight:bold;font-size:27px">1</text>
<text x="0" y="0" transform="translate(722.9 517.3) scale(1 1)" text-anchor="middle" fill="#ff0000" style="font-family:Liberation Sans;font-weight:bold;font-size:27px">5</text>
<text x="0" y="0" transform="translate(742 517.3) scale(1 1)" text-anchor="middle" fill="#ff0000" style="font-family:Liberation Sans;font-weight:bold;font-size:27px">y</text>
<text x="0" y="0" transform="translate(757.8 517.3) scale(0.72 1)" text-anchor="middle" fill="#ff0000" style="font-family:Liberation Sans;font-weight:bold;font-size:27px">m</text>
<text x="0" y="0" transform="translate(771.1 517.3) scale(1 1)" text-anchor="middle" fill="#ff0000" style="font-family:Liberation Sans;font-weight:bold;font-size:27px">.</text>
<text x="0" y="0" transform="translate(791.6 517.3) scale(1 1)" text-anchor="middle" fill="#ff0000" style="font-family:Liberation Sans;font-weight:bold;font-size:27px">c</text>
<text x="0" y="0" transform="translate(808.8 517.3) scale(1 1)" text-anchor="middle" fill="#ff0000" style="font-family:Liberation Sans;font-weight:bold;font-size:27px">o</text>
<text x="0" y="0" transform="translate(825.7 517.3) scale(0.72 1)" text-anchor="middle" fill="#ff0000" style="font-family:Liberation Sans;font-weight:bold;font-size:27px">m</text>
<text x="0" y="0" transform="translate(699.2 548.4) rotate(27.3) scale(1 1)" text-anchor="middle" dominant-baseline="central" fill="#ff0000" style="font-family:Liberation Sans;font-style:italic;font-size:14px">5</text>
<text x="0" y="0" transform="translate(712.3 554.2) rotate(20.7) scale(1 1)" text-anchor="middle" dominant-baseline="central" fill="#ff0000" style="font-family:Liberation Sans;font-style:italic;font-size:14px">1</text>
<text x="0" y="0" transform="translate(726.0 558.5) rotate(14.1) scale(1 1)" text-anchor="middle" dominant-baseline="central" fill="#ff0000" style="font-family:Liberation Sans;font-style:italic;font-size:14px">5</text>
<text x="0" y="0" transform="translate(740.2 561.2) rotate(7.5) scale(1 1)" text-anchor="middle" dominant-baseline="central" fill="#ff0000" style="font-family:Liberation Sans;font-style:italic;font-size:14px">y</text>
<text x="0" y="0" transform="translate(754.5 562.3) rotate(0.9) scale(0.8 1)" text-anchor="middle" dominant-baseline="central" fill="#ff0000" style="font-family:Liberation Sans;font-style:italic;font-size:14px">m</text>
<text x="0" y="0" transform="translate(768.9 561.7) rotate(-5.7) scale(1 1)" text-anchor="middle" dominant-baseline="central" fill="#ff0000" style="font-family:Liberation Sans;font-style:italic;font-size:14px">.</text>
<text x="0" y="0" transform="translate(783.1 559.4) rotate(-12.3) scale(1 1)" text-anchor="middle" dominant-baseline="central" fill="#ff0000" style="font-family:Liberation Sans;font-style:italic;font-size:14px">c</text>
<text x="0" y="0" transform="translate(797.0 555.6) rotate(-18.9) scale(1 1)" text-anchor="middle" dominant-baseline="central" fill="#ff0000" style="font-family:Liberation Sans;font-style:italic;font-size:14px">o</text>
<text x="0" y="0" transform="translate(810.3 550.1) rotate(-25.5) scale(0.8 1)" text-anchor="middle" dominant-baseline="central" fill="#ff0000" style="font-family:Liberation Sans;font-style:italic;font-size:14px">m</text>
</svg>
</body></html>
